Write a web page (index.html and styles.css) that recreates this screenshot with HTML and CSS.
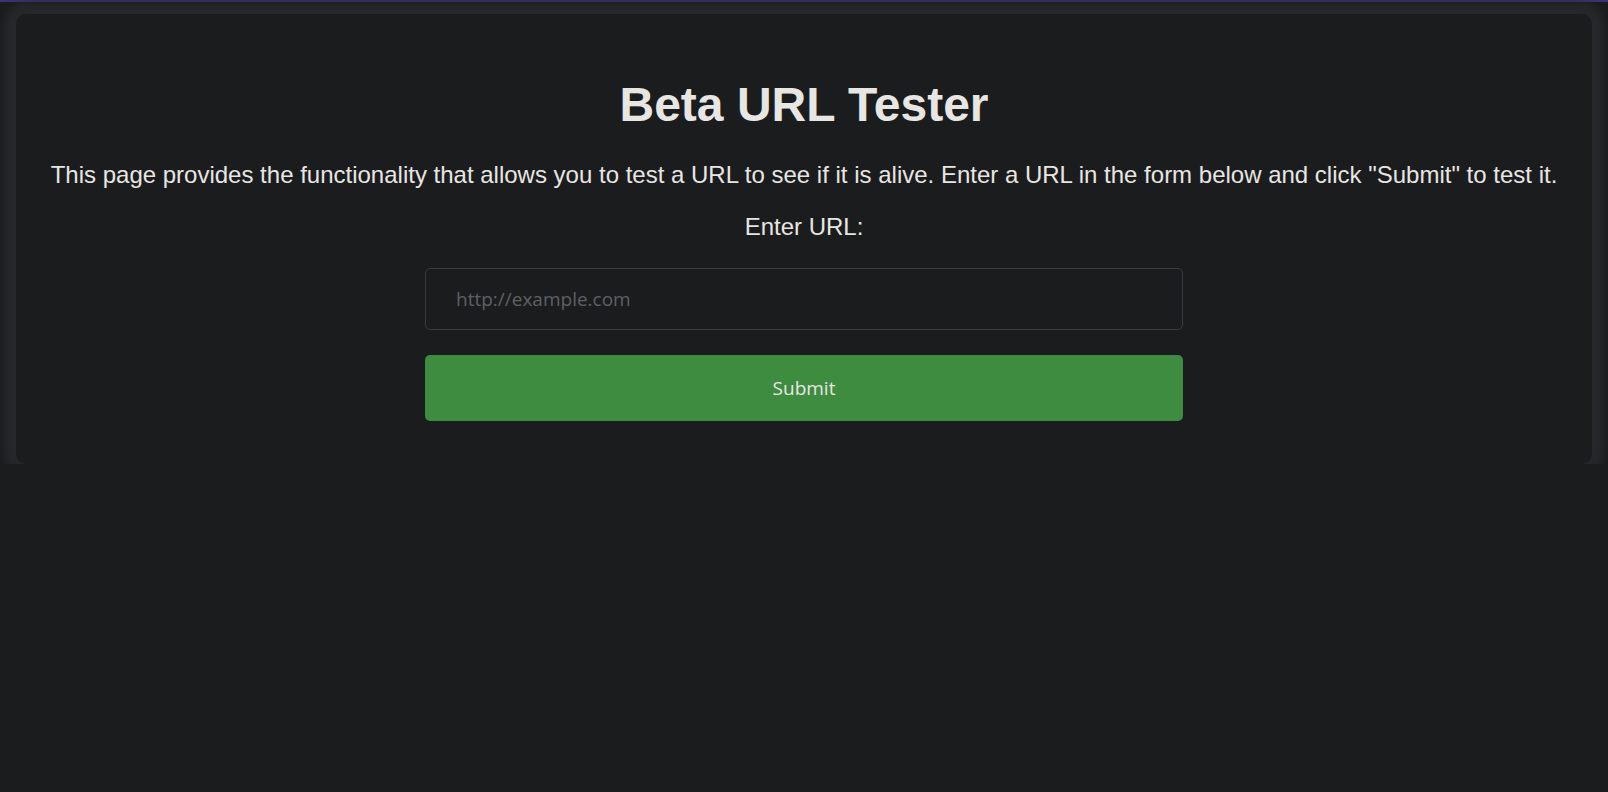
FILE: index.html
```html
<!DOCTYPE html>
<html lang="en">
<head>
<meta charset="utf-8">
<title>Beta URL Tester</title>
<link rel="stylesheet" href="styles.css">
</head>
<body>
<div class="topline"></div>
<main class="wrap">
  <section class="card">
    <h1 class="title">Beta URL Tester</h1>
    <p class="intro">This page provides the functionality that allows you to test a URL to see if it is alive. Enter a URL in the form below and click "Submit" to test it.</p>
    <form class="form">
      <label class="label" for="url">Enter URL:</label>
      <input class="input" id="url" type="text" placeholder="http://example.com">
      <button class="btn" type="button">Submit</button>
    </form>
  </section>
</main>
</body>
</html>
```

FILE: styles.css
```css
html, body {
  margin: 0;
  padding: 0;
  background: #1b1c1e;
  color: #e8e6e3;
  font-family: "Liberation Sans", Arial, sans-serif;
}

.topline {
  height: 2px;
  background: #3b3279;
}

.wrap {
  padding: 12px 16px 0;
}

.card {
  background: #1b1c1e;
  border-radius: 10px;
  box-shadow: 0 0 8px 11px #26292b;
  padding: 63px 20px 43px;
  text-align: center;
}

.title {
  margin: 0;
  font-size: 48px;
  font-weight: bold;
  line-height: 55px;
  color: #e8e6e3;
}

.intro {
  margin: 29px 0 0;
  font-size: 24px;
  line-height: 28px;
}

.form {
  display: flex;
  flex-direction: column;
  align-items: center;
}

.label {
  margin-top: 24px;
  font-size: 24px;
  line-height: 28px;
}

.input {
  box-sizing: border-box;
  margin-top: 27px;
  width: 758px;
  height: 62px;
  padding: 0 30px;
  background: #1b1c1e;
  border: 1px solid #3a3c3f;
  border-radius: 5px;
  color: #e8e6e3;
  font-family: "Open Sans", "Noto Sans", sans-serif;
  font-size: 19px;
  outline: none;
}

.input::placeholder {
  color: #5e6163;
}

.btn {
  box-sizing: border-box;
  margin-top: 25px;
  width: 758px;
  height: 66px;
  background: #3d8c40;
  border: none;
  border-radius: 5px;
  color: #e8e6e3;
  font-family: "Open Sans", "Noto Sans", sans-serif;
  font-size: 19px;
}
```
